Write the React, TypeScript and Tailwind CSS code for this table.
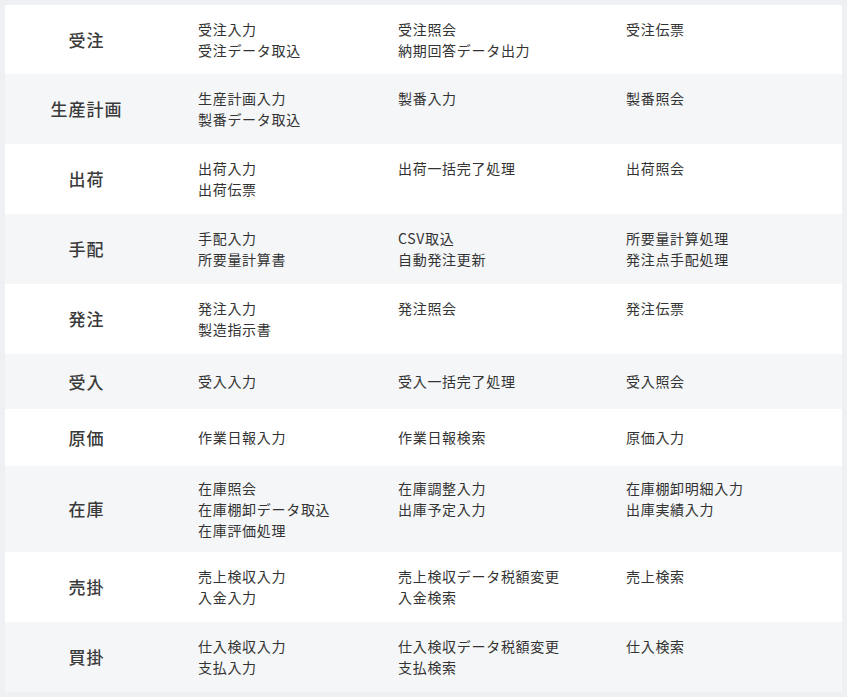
import React from 'react'

interface MenuRow {
  label: string
  height: string
  cols: string[][]
}

const rows: MenuRow[] = [
  { label: '受注', height: 'h-[69px]', cols: [['受注入力', '受注データ取込'], ['受注照会', '納期回答データ出力'], ['受注伝票']] },
  { label: '生産計画', height: 'h-[70px]', cols: [['生産計画入力', '製番データ取込'], ['製番入力'], ['製番照会']] },
  { label: '出荷', height: 'h-[70px]', cols: [['出荷入力', '出荷伝票'], ['出荷一括完了処理'], ['出荷照会']] },
  { label: '手配', height: 'h-[70px]', cols: [['手配入力', '所要量計算書'], ['CSV取込', '自動発注更新'], ['所要量計算処理', '発注点手配処理']] },
  { label: '発注', height: 'h-[70px]', cols: [['発注入力', '製造指示書'], ['発注照会'], ['発注伝票']] },
  { label: '受入', height: 'h-[55px]', cols: [['受入入力'], ['受入一括完了処理'], ['受入照会']] },
  { label: '原価', height: 'h-[57px]', cols: [['作業日報入力'], ['作業日報検索'], ['原価入力']] },
  { label: '在庫', height: 'h-[86px]', cols: [['在庫照会', '在庫棚卸データ取込', '在庫評価処理'], ['在庫調整入力', '出庫予定入力'], ['在庫棚卸明細入力', '出庫実績入力']] },
  { label: '売掛', height: 'h-[70px]', cols: [['売上検収入力', '入金入力'], ['売上検収データ税額変更', '入金検索'], ['売上検索']] },
  { label: '買掛', height: 'h-[70px]', cols: [['仕入検収入力', '支払入力'], ['仕入検収データ税額変更', '支払検索'], ['仕入検索']] },
]

function MenuList({ items }: { items: string[] }) {
  return (
    <ul>
      {items.map((item) => (
        <li key={item} className="leading-[21px] cursor-pointer hover:underline">
          {item}
        </li>
      ))}
    </ul>
  )
}

export default function App() {
  return (
    <div
      className="min-h-screen bg-[#eef0f3] p-[5px] text-[#333333]"
      style={{ fontFamily: '"Noto Sans CJK JP", "Noto Sans", sans-serif' }}
    >
      <div className="bg-white">
        {rows.map((row, i) => (
          <div
            key={row.label}
            className={`flex items-center ${row.height} ${i % 2 === 1 ? 'bg-[#f5f6f8]' : 'bg-white'}`}
          >
            <div className="w-[163px] shrink-0 text-center text-[17px] font-medium tracking-[1px] text-[#3a3a3a]">
              {row.label}
            </div>
            <div className="flex flex-1 items-start text-[14px] tracking-[0.7px]">
              <div className="w-[230px] pl-[30px]">
                <MenuList items={row.cols[0]} />
              </div>
              <div className="w-[228px]">
                <MenuList items={row.cols[1]} />
              </div>
              <div className="flex-1">
                <MenuList items={row.cols[2]} />
              </div>
            </div>
          </div>
        ))}
      </div>
    </div>
  )
}
